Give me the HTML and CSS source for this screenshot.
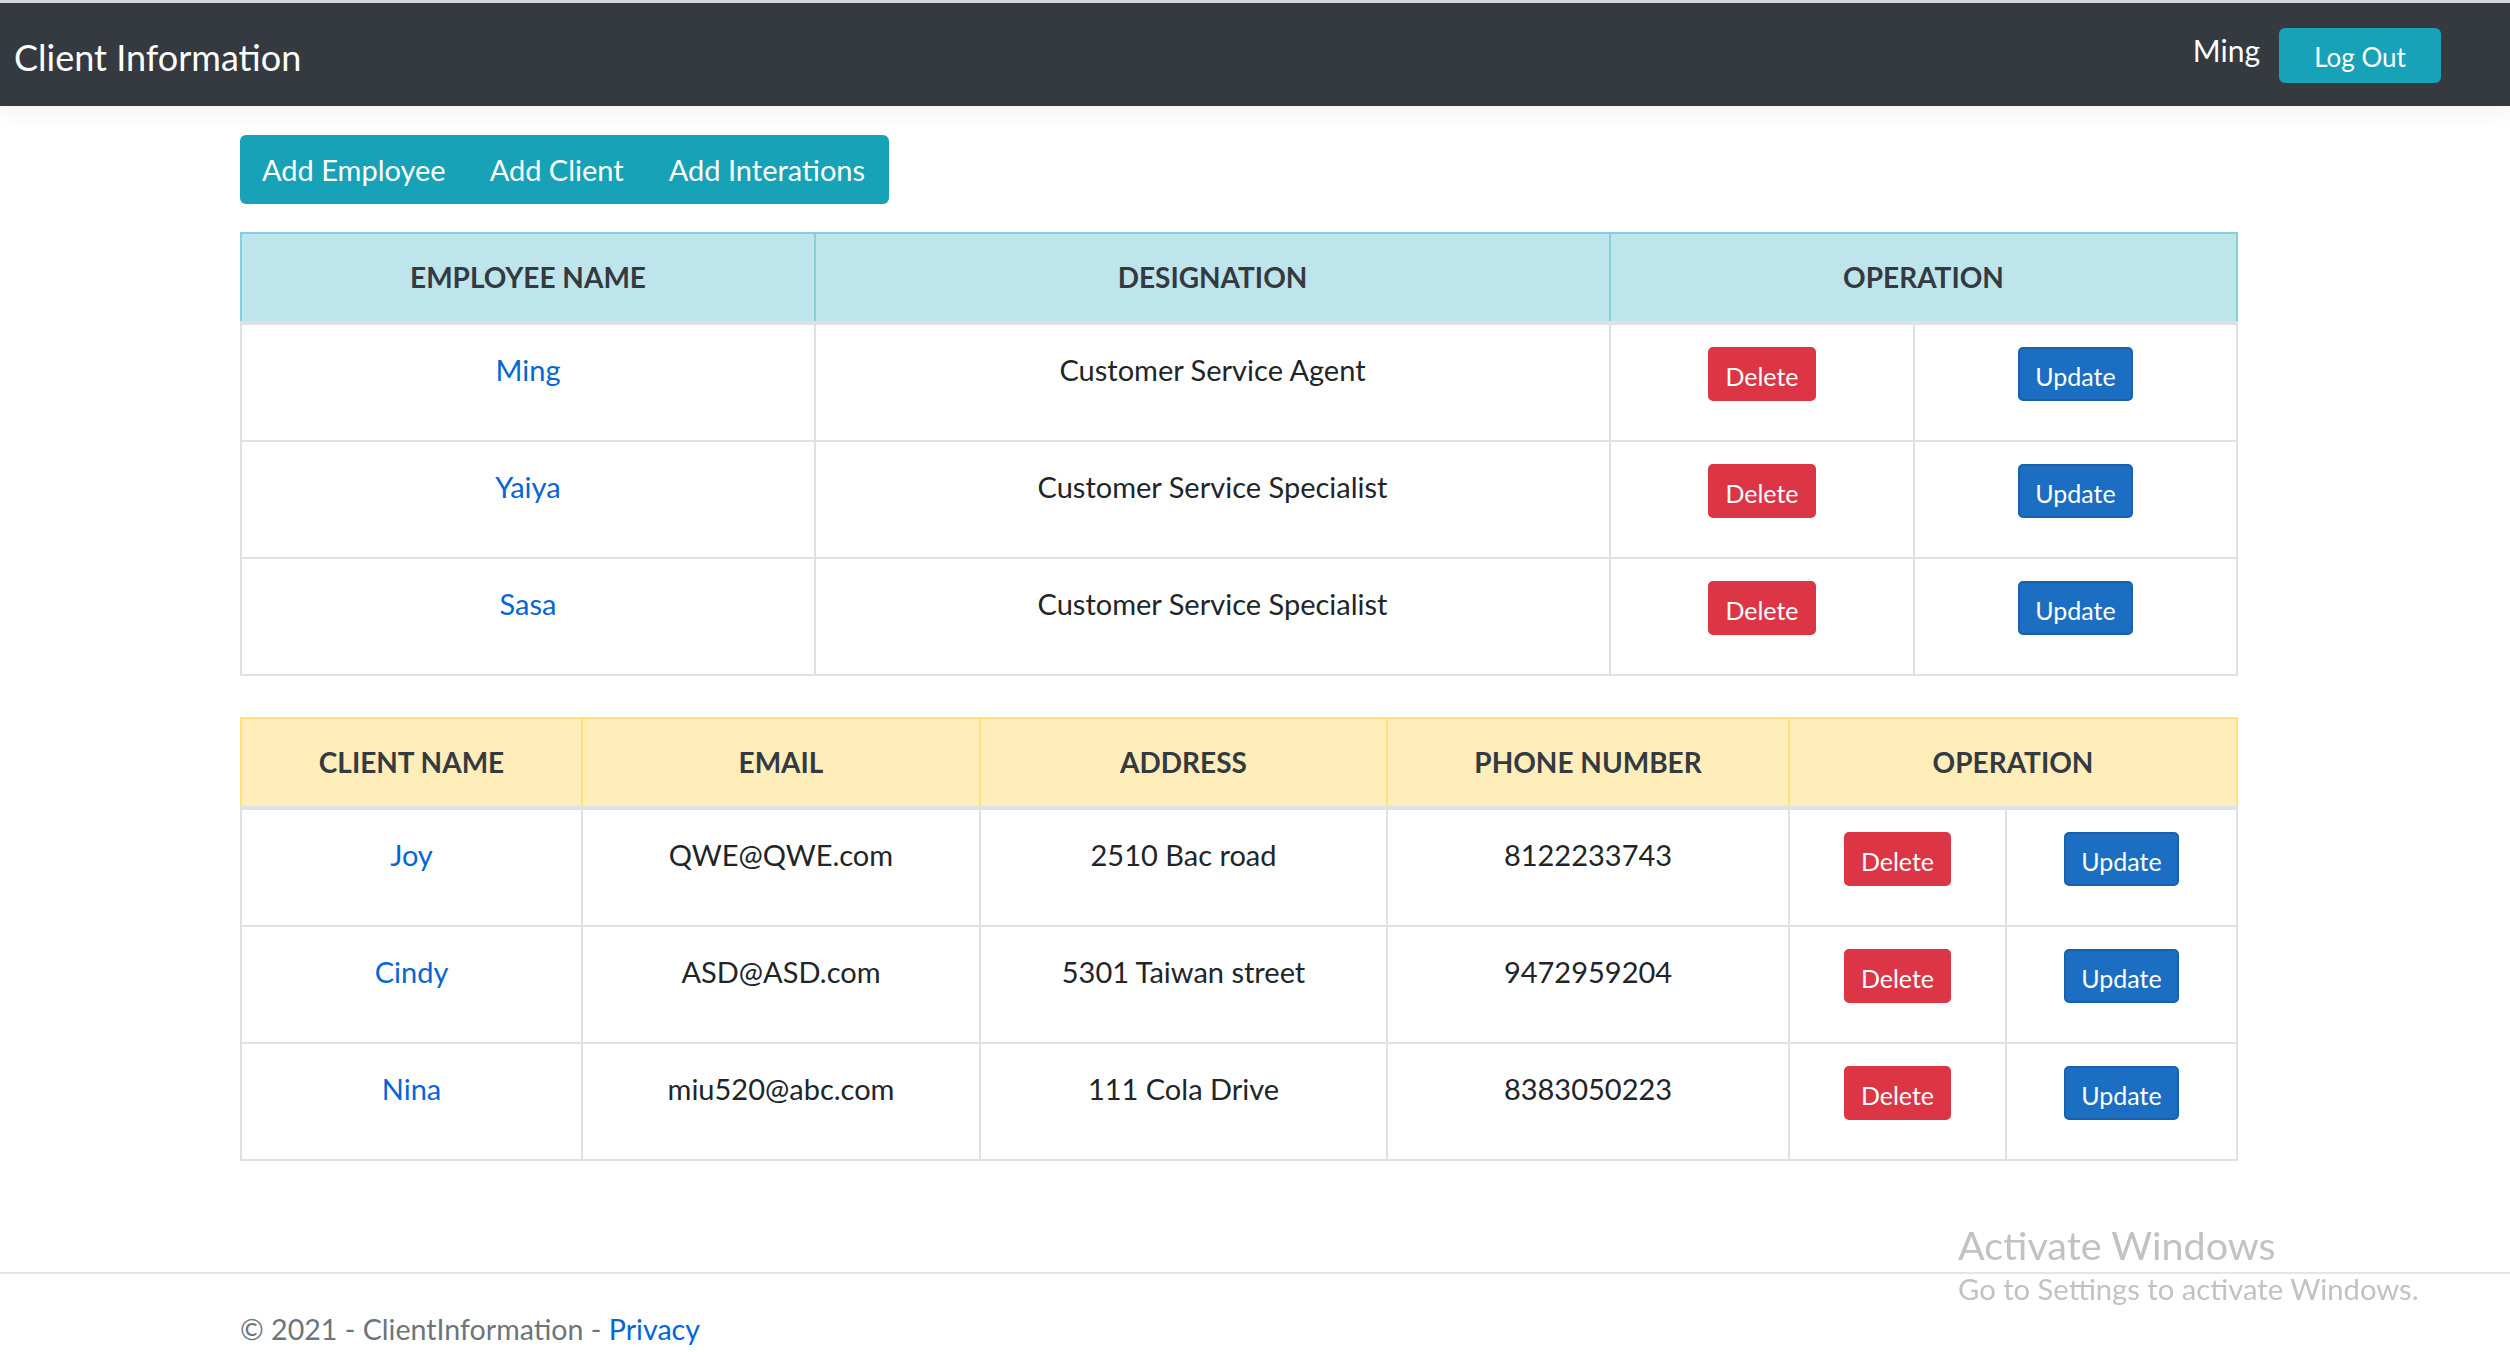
FILE: index.html
```html
<!DOCTYPE html>
<html lang="en">
<head>
<meta charset="utf-8">
<title>Client Information</title>
<link rel="stylesheet" href="styles.css">
</head>
<body>
<div class="topstrip"></div>
<header class="navbar">
  <a class="brand" href="#">Client Information</a>
  <div class="nav-right">
    <span class="nav-user">Ming</span>
    <button class="btn-logout">Log Out</button>
  </div>
</header>

<main class="container">
  <nav class="tabgroup">
    <a class="tab" href="#">Add Employee</a>
    <a class="tab" href="#">Add Client</a>
    <a class="tab" href="#">Add Interations</a>
  </nav>

  <table class="grid grid-info">
    <colgroup>
      <col class="w574"><col class="w795"><col class="w304"><col class="w323">
    </colgroup>
    <thead>
      <tr><th>EMPLOYEE NAME</th><th>DESIGNATION</th><th colspan="2">OPERATION</th></tr>
    </thead>
    <tbody>
      <tr>
        <td><a class="name" href="#">Ming</a></td>
        <td>Customer Service Agent</td>
        <td><div class="form"><button class="btn btn-del">Delete</button></div></td>
        <td><div class="form"><button class="btn btn-upd">Update</button></div></td>
      </tr>
      <tr>
        <td><a class="name" href="#">Yaiya</a></td>
        <td>Customer Service Specialist</td>
        <td><div class="form"><button class="btn btn-del">Delete</button></div></td>
        <td><div class="form"><button class="btn btn-upd">Update</button></div></td>
      </tr>
      <tr>
        <td><a class="name" href="#">Sasa</a></td>
        <td>Customer Service Specialist</td>
        <td><div class="form"><button class="btn btn-del">Delete</button></div></td>
        <td><div class="form"><button class="btn btn-upd">Update</button></div></td>
      </tr>
    </tbody>
  </table>

  <table class="grid grid-warn">
    <colgroup>
      <col class="w341"><col class="w398"><col class="w407"><col class="w402"><col class="w217"><col class="w231">
    </colgroup>
    <thead>
      <tr><th>CLIENT NAME</th><th>EMAIL</th><th>ADDRESS</th><th>PHONE NUMBER</th><th colspan="2">OPERATION</th></tr>
    </thead>
    <tbody>
      <tr>
        <td><a class="name" href="#">Joy</a></td>
        <td>QWE@QWE.com</td>
        <td>2510 Bac road</td>
        <td>8122233743</td>
        <td><div class="form"><button class="btn btn-del">Delete</button></div></td>
        <td><div class="form"><button class="btn btn-upd">Update</button></div></td>
      </tr>
      <tr>
        <td><a class="name" href="#">Cindy</a></td>
        <td>ASD@ASD.com</td>
        <td>5301 Taiwan street</td>
        <td>9472959204</td>
        <td><div class="form"><button class="btn btn-del">Delete</button></div></td>
        <td><div class="form"><button class="btn btn-upd">Update</button></div></td>
      </tr>
      <tr>
        <td><a class="name" href="#">Nina</a></td>
        <td>miu520@abc.com</td>
        <td>111 Cola Drive</td>
        <td>8383050223</td>
        <td><div class="form"><button class="btn btn-del">Delete</button></div></td>
        <td><div class="form"><button class="btn btn-upd">Update</button></div></td>
      </tr>
    </tbody>
  </table>
</main>

<footer class="footer">
  <span>&copy; 2021 - ClientInformation - <a class="privacy" href="#">Privacy</a></span>
</footer>

<div class="activate">
  <div class="act-title">Activate Windows</div>
  <div class="act-sub">Go to Settings to activate Windows.</div>
</div>
</body>
</html>
```

FILE: styles.css
```css
html, body {
  margin: 0;
  padding: 0;
}
body {
  font-family: Lato, "Open Sans", sans-serif;
  color: #212529;
  background: #ffffff;
  width: 2510px;
  overflow: hidden;
}
a { text-decoration: none; }

.topstrip {
  height: 3px;
  background: #d5d8dc;
}

.navbar {
  height: 103px;
  background: #343a40;
  display: flex;
  align-items: center;
  justify-content: space-between;
  padding: 0 69px 0 14px;
  box-shadow: 0 8px 22px rgba(0, 0, 0, 0.05);
  position: relative;
}
.brand {
  color: #ffffff;
  font-size: 36px;
  line-height: 56px;
  padding-top: 4px;
}
.nav-right {
  display: flex;
  align-items: center;
  gap: 19px;
}
.nav-user {
  color: #ffffff;
  font-size: 30px;
  line-height: 45px;
  padding-bottom: 8px;
}
.btn-logout {
  font-family: Lato, "Open Sans", sans-serif;
  background: #17a2b8;
  color: #ffffff;
  border: 0;
  border-radius: 6px;
  height: 55px;
  width: 162px;
  font-size: 26px;
  padding: 4px 0 0 0;
  margin-top: 1px;
}

.container {
  width: 1996px;
  margin-left: 240px;
  padding-top: 29px;
}

.tabgroup {
  display: inline-flex;
  background: #17a2b8;
  border-radius: 6px;
  height: 69px;
  align-items: center;
}
.tab {
  color: #ffffff;
  font-size: 29px;
  line-height: 69px;
  padding: 0 22px;
}
.tab:first-child { padding-right: 22px; }
.tab:last-child { padding-left: 23px; padding-right: 24px; }

.grid {
  width: 1996px;
  table-layout: fixed;
  border-collapse: collapse;
  margin-top: 28px;
}
.grid-warn { margin-top: 41px; }

.w574 { width: 574px; }
.w795 { width: 795px; }
.w304 { width: 304px; }
.w323 { width: 323px; }
.w341 { width: 341px; }
.w398 { width: 398px; }
.w407 { width: 407px; }
.w402 { width: 402px; }
.w217 { width: 217px; }
.w231 { width: 231px; }

.grid th {
  font-size: 28px;
  font-weight: 700;
  color: #343a40;
  line-height: 45px;
  padding: 21px 10px;
  text-align: center;
  border: 2px solid;
  border-bottom: 4px solid #dee2e6;
}
.grid-info th {
  background: #bee5eb;
  border-color: #86cfda;
  border-bottom-color: #dee2e6;
}
.grid-warn th {
  background: #ffeeba;
  border-color: #ffdf7e;
  border-bottom-color: #dee2e6;
}
.grid td {
  font-size: 29px;
  line-height: 45px;
  padding: 22px 10px;
  text-align: center;
  vertical-align: top;
  border: 2px solid #dee2e6;
}
.name { color: #0366d6; }

.form {
  display: flex;
  justify-content: center;
  margin-bottom: 17px;
}
.btn {
  font-family: Lato, "Open Sans", sans-serif;
  height: 54px;
  font-size: 25px;
  color: #ffffff;
  border-radius: 5px;
  padding: 3px 15px 0 15px;
  border: 2px solid;
}
.btn-del {
  background: #dc3545;
  border-color: #dc3545;
}
.btn-upd {
  background: #1b6ec2;
  border-color: #1861ac;
}

.footer {
  margin-top: 111px;
  border-top: 2px solid #e5e5e5;
  padding-left: 240px;
  font-size: 28.6px;
  line-height: 110px;
  color: #6c757d;
}
.privacy { color: #0366d6; }

.activate {
  position: fixed;
  left: 1958px;
  top: 1219px;
  color: #c2c2c2;
}
.act-title {
  font-size: 39.5px;
  line-height: 52px;
}
.act-sub {
  font-size: 29.2px;
  line-height: 36px;
}
```
